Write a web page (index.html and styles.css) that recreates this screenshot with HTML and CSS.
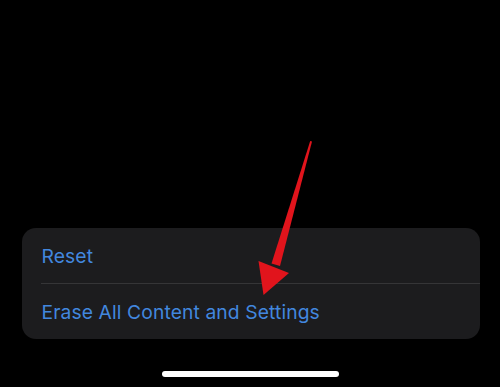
FILE: index.html
```html
<!DOCTYPE html>
<html lang="en">
<head>
  <meta charset="UTF-8">
  <meta name="viewport" content="width=device-width, initial-scale=1.0">
  <title>Reset</title>
  <link rel="stylesheet" href="styles.css">
</head>
<body>
  <div class="screen">
    <div class="menu">
      <div class="menu-item">Reset</div>
      <div class="menu-item">Erase All Content and Settings</div>
    </div>
    <div class="home-bar"></div>

    <!-- annotation arrow -->
    <svg class="arrow" width="500" height="387" viewBox="0 0 500 387">
      <polygon points="310.2,141 312,141.6 280,266 271.5,263.5" fill="#e1141c"/>
      <polygon points="258.5,261 289,273 263.5,295" fill="#e1141c"/>
    </svg>
  </div>
</body>
</html>
```

FILE: styles.css
```css
body {
  margin: 0;
  background-color: #000;
  font-family: Inter, "Noto Sans", sans-serif;
}
.screen {
  position: relative;
  width: 500px;
  height: 387px;
  display: flex;
  flex-direction: column;
  align-items: center;
  overflow: hidden;
}
.menu {
  margin-top: 228px;
  width: 458px;
  margin-left: 1px;
  background-color: #1c1c1e;
  border-radius: 14px;
}
.menu-item {
  height: 55px;
  display: flex;
  align-items: center;
  padding-left: 20px;
  font-size: 19.3px;
  color: #4287de;
  letter-spacing: 0.1px;
}
.menu-item + .menu-item {
  border-top: 1px solid #353537;
  margin-left: 19px;
  padding-left: 1px;
}
.home-bar {
  margin-top: 32px;
  width: 177px;
  height: 6px;
  border-radius: 3px;
  background-color: #fff;
}
.arrow {
  position: absolute;
  left: 0;
  top: 0;
}
```
